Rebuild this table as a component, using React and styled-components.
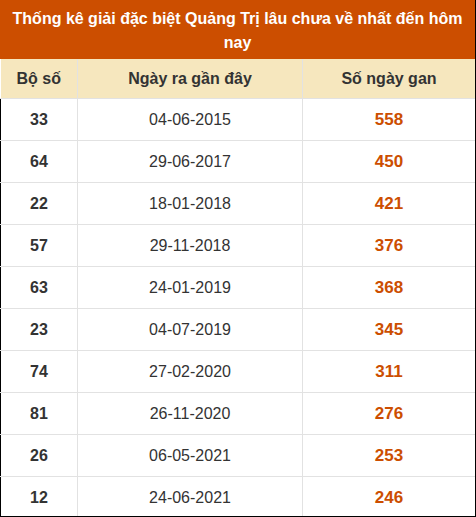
import React from 'react';
import styled, { createGlobalStyle } from 'styled-components';

const GlobalStyle = createGlobalStyle`
  html, body { margin: 0; padding: 0; background: #fff; }
  body { font-family: "Liberation Sans", Arial, sans-serif; }
`;

const Frame = styled.div`
  width: 476px;
  height: 517px;
  box-sizing: border-box;
  border-right: 1px solid #000;
  border-bottom: 1px solid #000;
  overflow: hidden;
`;

const Title = styled.div`
  background: #cc4e00;
  color: #fff;
  font-weight: bold;
  font-size: 16px;
  line-height: 24px;
  text-align: center;
  padding: 7px 8px 4px;
  height: 59px;
  box-sizing: border-box;
`;

const Table = styled.table`
  width: 100%;
  border-collapse: collapse;
  table-layout: fixed;
`;

const HeadCell = styled.th`
  background: #f6e7be;
  color: #333;
  font-size: 16px;
  font-weight: bold;
  height: 39px;
  padding: 0;
  text-align: center;
  border-right: 1px solid #e2e2e2;
  border-bottom: 1px solid #e2e2e2;
  &:last-child { border-right: none; }
`;

const Row = styled.tr`
  & > td:first-child { border-left: 1px solid #000; }
`;

const Cell = styled.td`
  height: 41px;
  padding: 0;
  text-align: center;
  color: ${p => (p.$gan ? '#cc4e00' : '#333')};
  font-size: ${p => (p.$gan ? '17px' : '16px')};
  font-weight: ${p => (p.$bold ? 'bold' : 'normal')};
  border-right: 1px solid #e2e2e2;
  border-bottom: 1px solid #e2e2e2;
  &:last-child { border-right: none; }
`;

const rows = [
  ['33', '04-06-2015', '558'],
  ['64', '29-06-2017', '450'],
  ['22', '18-01-2018', '421'],
  ['57', '29-11-2018', '376'],
  ['63', '24-01-2019', '368'],
  ['23', '04-07-2019', '345'],
  ['74', '27-02-2020', '311'],
  ['81', '26-11-2020', '276'],
  ['26', '06-05-2021', '253'],
  ['12', '24-06-2021', '246'],
];

export default function App() {
  return (
    <>
      <GlobalStyle />
      <Frame>
        <Title>Thống kê giải đặc biệt Quảng Trị lâu chưa về nhất đến hôm nay</Title>
        <Table>
          <colgroup>
            <col style={{ width: 77 }} />
            <col style={{ width: 225 }} />
            <col />
          </colgroup>
          <thead>
            <tr>
              <HeadCell>Bộ số</HeadCell>
              <HeadCell>Ngày ra gần đây</HeadCell>
              <HeadCell>Số ngày gan</HeadCell>
            </tr>
          </thead>
          <tbody>
            {rows.map((r, i) => (
              <Row key={i}>
                <Cell $bold>{r[0]}</Cell>
                <Cell>{r[1]}</Cell>
                <Cell $bold $gan>{r[2]}</Cell>
              </Row>
            ))}
          </tbody>
        </Table>
      </Frame>
    </>
  );
}
